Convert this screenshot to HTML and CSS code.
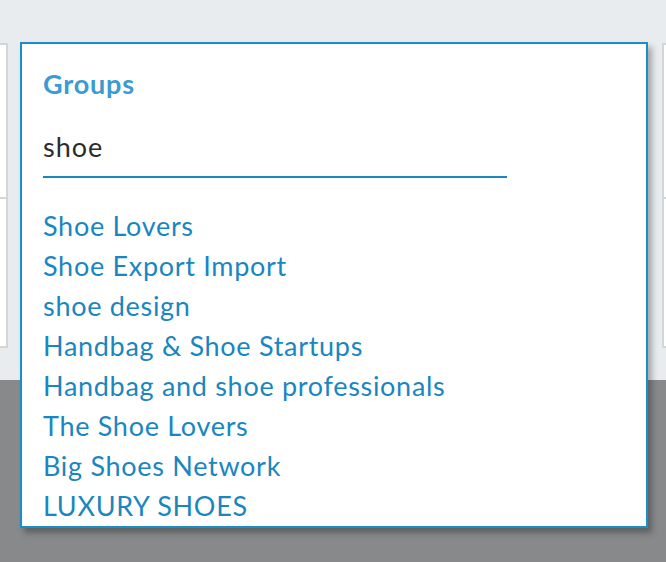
FILE: index.html
```html
<!DOCTYPE html>
<html>
<head>
<meta charset="utf-8">
<link rel="stylesheet" href="styles.css">
</head>
<body>
<div class="page">
  <div class="top">
    <div class="card card-left">
      <div class="card-head"></div>
      <div class="card-body"></div>
    </div>
    <div class="card card-right">
      <div class="card-head"></div>
      <div class="card-body"></div>
    </div>
  </div>
  <div class="backdrop"></div>
  <div class="popup">
    <div class="popup-title">Groups</div>
    <div class="search">shoe</div>
    <ul class="results">
      <li>Shoe Lovers</li>
      <li>Shoe Export Import</li>
      <li>shoe design</li>
      <li>Handbag &amp; Shoe Startups</li>
      <li>Handbag and shoe professionals</li>
      <li>The Shoe Lovers</li>
      <li>Big Shoes Network</li>
      <li>LUXURY SHOES</li>
    </ul>
  </div>
</div>
</body>
</html>
```

FILE: styles.css
```css
html, body {
  margin: 0;
  padding: 0;
  height: 100%;
}
body {
  font-family: Lato, "Open Sans", sans-serif;
  background: #88898b;
}
.page {
  position: relative;
  height: 562px;
  display: flex;
  flex-direction: column;
  overflow: hidden;
}
.top {
  height: 380px;
  background: #e9ecef;
  display: flex;
  justify-content: space-between;
  align-items: flex-start;
  padding-top: 43px;
  box-sizing: border-box;
}
.card {
  background: #fff;
  border: 2px solid #d2d6d9;
  height: 305px;
  box-sizing: border-box;
  display: flex;
  flex-direction: column;
}
.card-left {
  width: 10px;
  margin-left: -2px;
}
.card-right {
  width: 10px;
  margin-right: -6px;
}
.card-head {
  height: 152px;
  border-bottom: 2px solid #d2d6d9;
}
.backdrop {
  flex: 1;
  background: #88898b;
}
.popup {
  position: absolute;
  left: 20px;
  top: 42px;
  width: 628px;
  height: 486px;
  box-sizing: border-box;
  background: #fff;
  border: 2px solid #1b8dc7;
  box-shadow: 4px 5px 6px rgba(0, 0, 0, 0.3);
  padding: 24px 0 0 21px;
  display: flex;
  flex-direction: column;
}
.popup-title {
  font-weight: 700;
  font-size: 27px;
  letter-spacing: 0.8px;
  line-height: 32px;
  color: #3b9bd2;
}
.search {
  margin-top: 27px;
  width: 464px;
  font-size: 27px;
  letter-spacing: 1px;
  line-height: 40px;
  color: #2b2b2b;
  padding-bottom: 9px;
  border-bottom: 2px solid #1a87c1;
}
.results {
  list-style: none;
  margin: 28px 0 0 0;
  padding: 0;
}
.results li {
  font-size: 27px;
  letter-spacing: 0.7px;
  line-height: 40px;
  color: #1a86c0;
}
```
